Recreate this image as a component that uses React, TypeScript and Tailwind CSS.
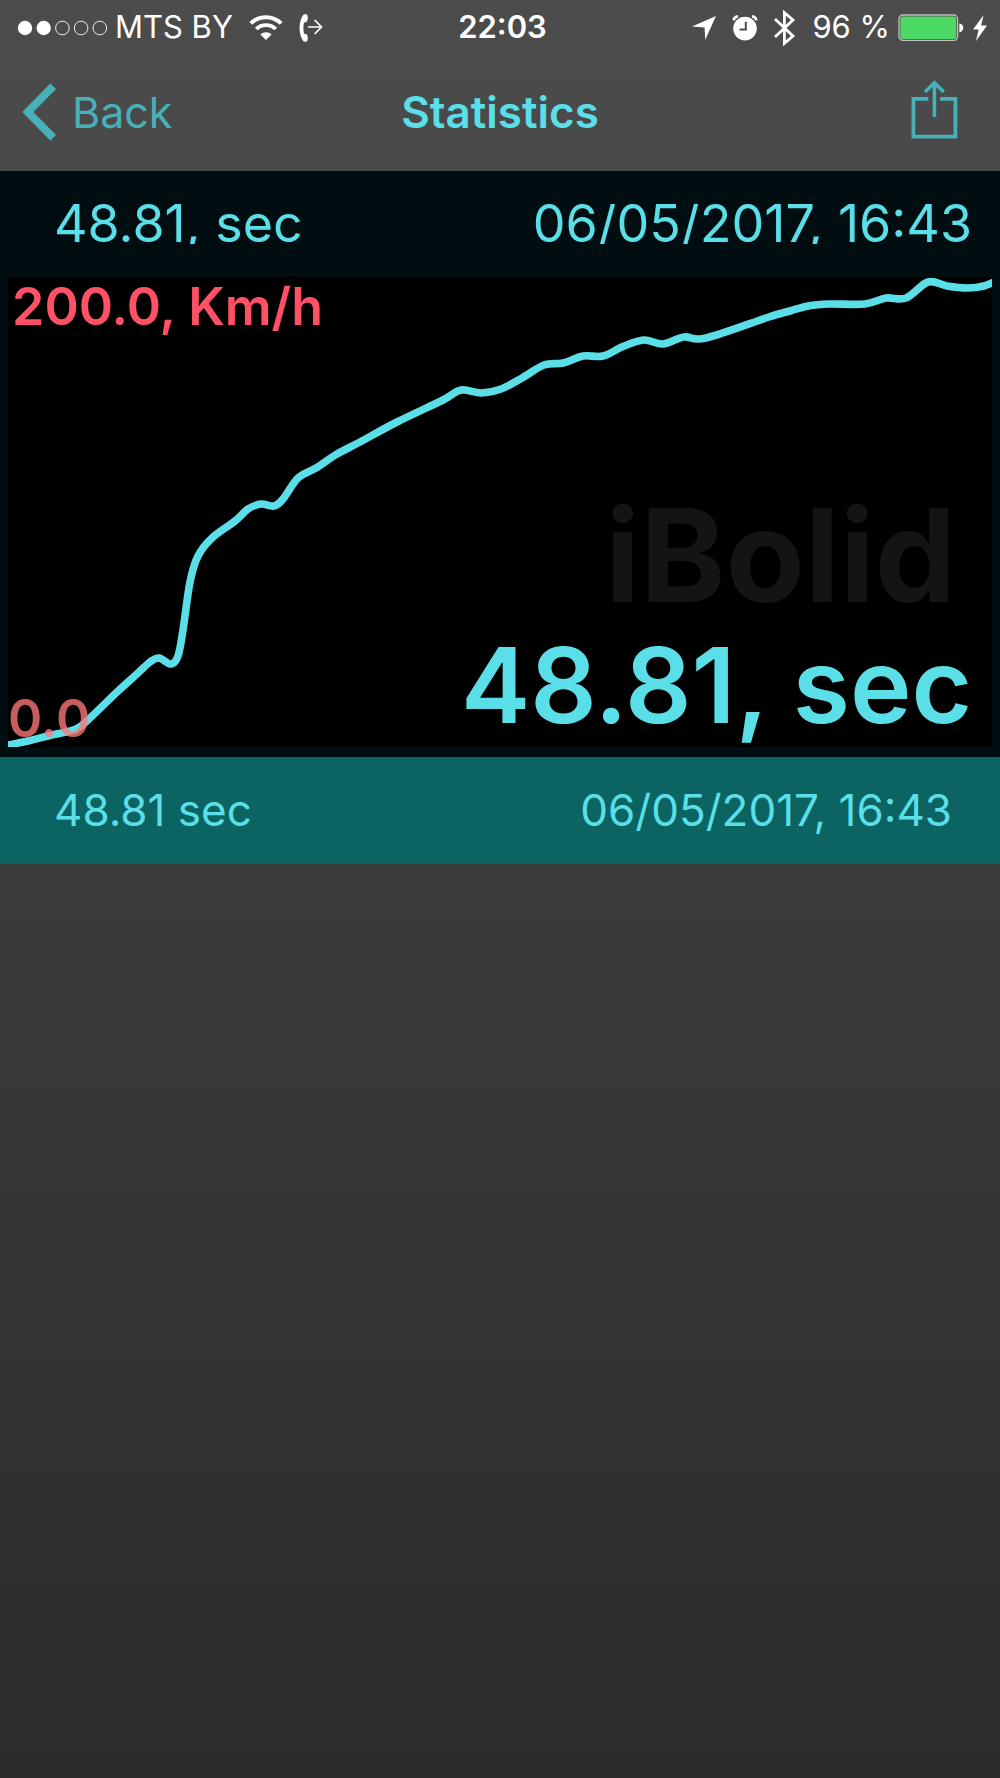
/**
 * Statistics Screen
 * Shows the speed graph of a measured run and the list of saved results
 */

import { useMemo } from 'react';

type Point = [number, number];

interface RunResult {
  id: number;
  seconds: string;
  date: string;
}

const results: RunResult[] = [{ id: 1, seconds: '48.81', date: '06/05/2017, 16:43' }];

const CHART_WIDTH = 984;
const CHART_HEIGHT = 470;

const speedPoints: Point[] = [
  [-4, 469], [20, 464], [40, 459], [68, 452], [82, 441], [109, 415], [130, 396], [142, 385],
  [151, 381], [163, 387], [170, 379], [175, 353], [182, 305], [190, 279], [204, 261],
  [227, 244], [240, 232], [253, 227], [266, 229], [275, 222], [290, 201], [308, 191],
  [329, 177], [352, 165], [389, 145], [435, 123], [453, 113], [473, 116], [493, 112], [514, 101],
  [536, 88], [555, 86], [575, 79], [595, 79], [616, 69], [636, 63], [655, 67], [676, 60],
  [698, 61], [761, 40], [782, 34], [800, 29], [821, 27], [857, 27], [878, 21],
  [898, 21], [920, 5], [939, 9], [959, 11], [976, 9], [990, 3],
];

// Catmull-Rom spline written as cubic bezier segments
function smoothPath(points: Point[]) {
  let d = `M${points[0][0]},${points[0][1]}`;
  for (let i = 0; i < points.length - 1; i++) {
    const p0 = points[i - 1] ?? points[i];
    const p1 = points[i];
    const p2 = points[i + 1];
    const p3 = points[i + 2] ?? p2;
    const c1 = [p1[0] + (p2[0] - p0[0]) / 6, p1[1] + (p2[1] - p0[1]) / 6];
    const c2 = [p2[0] - (p3[0] - p1[0]) / 6, p2[1] - (p3[1] - p1[1]) / 6];
    d += ` C${c1[0]},${c1[1]} ${c2[0]},${c2[1]} ${p2[0]},${p2[1]}`;
  }
  return d;
}

function SignalDots() {
  return (
    <svg width="90" height="16" viewBox="0 0 90 16" aria-hidden="true">
      {[0, 1, 2, 3, 4].map((i) => (
        <circle
          key={i}
          cx={8 + i * 18.7}
          cy="8"
          r={i < 2 ? 7.2 : 6.8}
          fill={i < 2 ? '#fff' : 'none'}
          stroke="#fff"
          strokeWidth={i < 2 ? 0 : 0.9}
        />
      ))}
    </svg>
  );
}

function WifiIcon() {
  return (
    <svg width="34" height="26" viewBox="0 0 34 26" fill="none" aria-hidden="true">
      <path d="M1.8 8.4C10.2 .2 23.8 .2 32.2 8.4" stroke="#fff" strokeWidth="4" />
      <path d="M7.2 14C12.6 8.8 21.4 8.8 26.8 14" stroke="#fff" strokeWidth="3.8" />
      <path d="M17 25L11.4 19.4C14.6 16.4 19.4 16.4 22.6 19.4Z" fill="#fff" />
    </svg>
  );
}

function CallForwardIcon() {
  return (
    <svg width="24" height="28" viewBox="0 0 24 28" fill="none" aria-hidden="true">
      <path
        d="M4.6 .6C5.8 .2 7.4 .2 8.2 .8C9 3 9 5.6 8 7.4C7 8.2 5.6 8.2 5 8.6C4.2 12 4.2 16 5 19.4C5.6 19.8 7 19.8 8 20.6C9 22.4 9 25 8.2 27.2C7.4 27.8 5.8 27.8 4.6 27.4C-.8 21 -.8 7 4.6 .6Z"
        fill="#fff"
      />
      <path d="M9 13H22M15.6 6L22.6 13L15.6 20" stroke="#fff" strokeWidth="1.7" />
    </svg>
  );
}

function LocationIcon() {
  return (
    <svg width="24" height="24" viewBox="0 0 24 24" aria-hidden="true">
      <path d="M24 0L13.2 24L12.6 11.6L0 10.4Z" fill="#fff" />
    </svg>
  );
}

function AlarmIcon() {
  return (
    <svg width="26" height="26" viewBox="0 0 26 26" fill="none" aria-hidden="true">
      <circle cx="13" cy="13.6" r="11.8" fill="#fff" />
      <path d="M13.8 6.8V14.6H7.6" stroke="#4b4b4b" strokeWidth="2" />
      <path d="M1.6 5.4C2 3 3.6 1.6 6 1.4M24.4 5.4C24 3 22.4 1.6 20 1.4" stroke="#fff" strokeWidth="2.6" />
    </svg>
  );
}

function BluetoothIcon() {
  return (
    <svg width="22" height="36" viewBox="0 0 22 36" fill="none" aria-hidden="true">
      <path d="M1 9L19 26L10.4 33.4V2.6L19 10L1 27" stroke="#fff" strokeWidth="2.8" />
    </svg>
  );
}

function BatteryIcon() {
  return (
    <svg width="66" height="28" viewBox="0 0 66 28" fill="none" aria-hidden="true">
      <rect x="1" y="1" width="58.6" height="25.4" rx="4" stroke="#c4bcc4" strokeWidth="1.3" />
      <rect x="2.4" y="2.4" width="55.8" height="22.6" rx="2.6" fill="#4cd964" />
      <path d="M61.4 9.4C66.6 10 66.6 17.6 61.4 18.2Z" fill="#fff" />
    </svg>
  );
}

function ChargingIcon() {
  return (
    <svg width="16" height="28" viewBox="0 0 16 28" aria-hidden="true">
      <path d="M11.6 1L1 15.4H6.6L4 27L15 11.6H9.2Z" fill="#fff" />
    </svg>
  );
}

function StatusBar() {
  return (
    <div className="grid h-[53px] grid-cols-[1fr_auto_1fr] items-center pt-[2px] pl-[17px] pr-3 text-[31px] text-white">
      <div className="flex items-center gap-2">
        <SignalDots />
        <span>MTS BY</span>
        <span className="ml-2 flex items-center gap-4">
          <WifiIcon />
          <CallForwardIcon />
        </span>
      </div>
      <time className="font-semibold">22:03</time>
      <div className="flex items-center justify-end gap-2">
        <span className="mr-2 flex items-center gap-4">
          <LocationIcon />
          <AlarmIcon />
          <BluetoothIcon />
        </span>
        <span>96 %</span>
        <BatteryIcon />
        <ChargingIcon />
      </div>
    </div>
  );
}

function NavBar() {
  return (
    <nav className="grid h-[118px] grid-cols-[1fr_auto_1fr] items-center px-[22px]">
      <button className="flex items-center gap-4 justify-self-start text-[43px] text-[#47b0b9]">
        <svg width="34" height="58" viewBox="0 0 34 58" fill="none" aria-hidden="true">
          <path d="M31.2 3.2L5.8 29L31.2 54.8" stroke="currentColor" strokeWidth="8" />
        </svg>
        Back
      </button>
      <h1 className="text-[44px] font-semibold text-[#5adee8]">Statistics</h1>
      <button aria-label="Share" className="mr-5 justify-self-end pb-1 text-[#47b0b9]">
        <svg width="48" height="60" viewBox="0 0 48 60" fill="none" aria-hidden="true">
          <path d="M18.4 18.8H3.4V56.6H45.4V18.8H30" stroke="currentColor" strokeWidth="3.8" />
          <path d="M24.4 37V3.6M15 12L24.4 2.8L33.8 12" stroke="currentColor" strokeWidth="3.6" />
        </svg>
      </button>
    </nav>
  );
}

function SpeedChart() {
  const path = useMemo(() => smoothPath(speedPoints), []);

  return (
    <div className="relative mx-2 h-[470px] overflow-hidden bg-black">
      <span className="absolute right-9 top-[214px] text-[129px] leading-[128px] font-bold text-[#141414]">
        iBolid
      </span>
      <svg
        className="absolute inset-0 h-full w-full"
        viewBox={`0 0 ${CHART_WIDTH} ${CHART_HEIGHT}`}
        preserveAspectRatio="none"
        fill="none"
        role="img"
        aria-label="Speed over time"
      >
        <path d={path} stroke="#5adfe8" strokeWidth="7.6" strokeLinejoin="round" vectorEffect="non-scaling-stroke" />
      </svg>
      <span className="absolute left-1 top-[2px] text-[52px] leading-[56px] font-semibold text-[#ff5065]">
        200.0, Km/h
      </span>
      <span className="absolute bottom-0 left-0 text-[52px] leading-[56px] font-semibold text-[#ff7777]/78">
        0.0
      </span>
      <span className="absolute bottom-[10px] right-5 text-[104px] leading-[104px] font-semibold text-[#5adfe8]">
        48.81, sec
      </span>
    </div>
  );
}

export default function App() {
  const current = results[0];

  return (
    <div className="min-h-screen bg-linear-to-b from-[#4c4c4c] to-[#2b2b2b] font-['Inter',sans-serif]">
      <header>
        <StatusBar />
        <NavBar />
      </header>

      <main>
        {/* Selected run */}
        <section className="bg-[#000e12] pb-[10px]">
          <div className="flex h-[106px] items-center justify-between pl-[54px] pr-7 text-[52px] leading-[40px] text-[#5adfe8]">
            <span className="overflow-hidden">{current.seconds}, sec</span>
            <span className="overflow-hidden">{current.date}</span>
          </div>
          <SpeedChart />
        </section>

        {/* Saved runs */}
        <ul>
          {results.map((result) => (
            <li key={result.id}>
              <button className="flex h-[107px] w-full items-center justify-between bg-[#0b6462] pb-[2px] pl-[54px] pr-12 text-[44px] text-[#5adfe8]">
                <span>{result.seconds} sec</span>
                <span>{result.date}</span>
              </button>
            </li>
          ))}
        </ul>
      </main>
    </div>
  );
}
